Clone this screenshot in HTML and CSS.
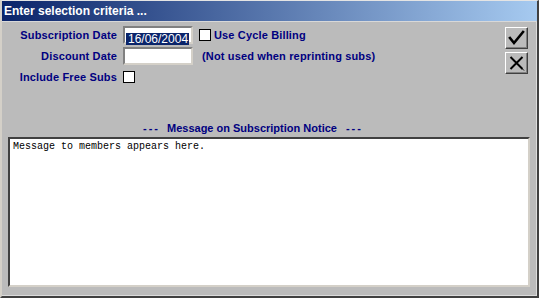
FILE: index.html
```html
<!DOCTYPE html>
<html lang="en">
<head>
  <meta charset="UTF-8" />
  <title>Enter selection criteria</title>
  <link rel="stylesheet" href="styles.css">
</head>
<body>
  <div class="window">
    <!-- Title Bar -->
    <div class="titlebar">Enter selection criteria ...</div>

    <div class="content">
      <div class="top">
        <!-- Criteria Fields -->
        <div class="form">
          <span class="lbl">Subscription Date</span>
          <div class="field"><span class="sel">16/06/2004</span></div>
          <div class="extra">
            <span class="check"></span>
            <span class="lbl">Use Cycle Billing</span>
          </div>

          <span class="lbl">Discount Date</span>
          <div class="field"></div>
          <div class="extra note"><span class="lbl">(Not used when reprinting subs)</span></div>

          <span class="lbl">Include Free Subs</span>
          <div class="extra"><span class="check"></span></div>
        </div>

        <!-- OK / Cancel -->
        <div class="buttons">
          <button class="btn" title="OK">
            <svg width="19" height="18" viewBox="0 0 19 18">
              <path d="M3 9 L7 14 L16 3" fill="none" stroke="#000" stroke-width="2.6" stroke-linecap="square" />
            </svg>
          </button>
          <button class="btn" title="Cancel">
            <svg width="19" height="18" viewBox="0 0 19 18">
              <path d="M3.5 3 L15.5 15 M15.5 3 L3.5 15" fill="none" stroke="#000" stroke-width="2" />
              <path d="M15.5 15 L17 16.5" stroke="#000" stroke-width="1" />
            </svg>
          </button>
        </div>
      </div>

      <div class="heading">
        <span class="dashes">---</span>
        <span>Message on Subscription Notice</span>
        <span class="dashes">---</span>
      </div>
      <div class="memo">Message to members appears here.</div>
    </div>
  </div>
</body>
</html>
```

FILE: styles.css
```css
/* Reset & Base */
* {
  margin: 0;
  padding: 0;
  box-sizing: border-box;
}

body {
  font-family: 'Liberation Sans', Arial, sans-serif;
  background: #bbbbbb;
}

/* Window Frame */
.window {
  width: 539px;
  height: 298px;
  display: flex;
  flex-direction: column;
  background: #bbbbbb;
  border-top: 1px solid #e4e4e4;
  border-left: 2px solid #d4d0c8;
  border-right: 2px solid #404040;
  border-bottom: 2px solid #404040;
}

.titlebar {
  height: 21px;
  padding: 2px 0 0 2px;
  color: #fff;
  font-weight: bold;
  font-size: 12px;
  line-height: 17px;
  background: linear-gradient(to right, #0a246a, #a6caf0);
  border-bottom: 1px solid #d8d8d8;
}

/* Content */
.content {
  flex: 1;
  display: flex;
  flex-direction: column;
  padding: 4px 6px 0 6px;
  border-right: 1px solid #dcdcdc;
  border-bottom: 1px solid #dcdcdc;
}

.top {
  display: flex;
  justify-content: space-between;
}

.form {
  display: grid;
  grid-template-columns: 109px 70px auto;
  grid-auto-rows: 18px;
  column-gap: 6px;
  row-gap: 3px;
  align-items: center;
}

.lbl {
  color: #000080;
  font-weight: bold;
  font-size: 11px;
  letter-spacing: 0.15px;
  text-align: right;
  white-space: nowrap;
}

.field {
  height: 18px;
  background: #fff;
  border-top: 2px solid #808080;
  border-left: 2px solid #808080;
  border-right: 2px solid #d4d0c8;
  border-bottom: 2px solid #d4d0c8;
  padding: 1px 1px;
}

.sel {
  display: inline-block;
  background: #0a246a;
  color: #fff;
  font-size: 12px;
  line-height: 12px;
  padding: 0 1px 0 2px;
}

.extra {
  display: flex;
  align-items: center;
  gap: 3px;
}

.note {
  padding-left: 3px;
}

.check {
  width: 12px;
  height: 12px;
  background: #fff;
  border: 1px solid #000;
}

/* Buttons */
.buttons {
  display: flex;
  flex-direction: column;
  gap: 3px;
  margin: 1px 2px 0 0;
}

.btn {
  width: 23px;
  height: 22px;
  display: flex;
  align-items: center;
  justify-content: center;
  background: #bbbbbb;
  border-top: 1px solid #fff;
  border-left: 1px solid #fff;
  border-right: 1px solid #404040;
  border-bottom: 1px solid #404040;
  box-shadow: inset -1px -1px 0 #808080;
}

/* Message */
.heading {
  display: flex;
  gap: 9px;
  margin-top: 36px;
  padding-left: 135px;
  color: #000080;
  font-weight: bold;
  font-size: 11px;
  line-height: 12px;
  white-space: nowrap;
}

.dashes {
  letter-spacing: 2px;
  margin-right: -2px;
}

.memo {
  height: 150px;
  margin-top: 3px;
  padding: 2px 3px;
  background: #fff;
  font-family: 'Liberation Mono', monospace;
  font-size: 10px;
  line-height: 12px;
  border-top: 2px solid #404040;
  border-left: 2px solid #404040;
  border-right: 2px solid #d4d0c8;
  border-bottom: 2px solid #d4d0c8;
}
```
